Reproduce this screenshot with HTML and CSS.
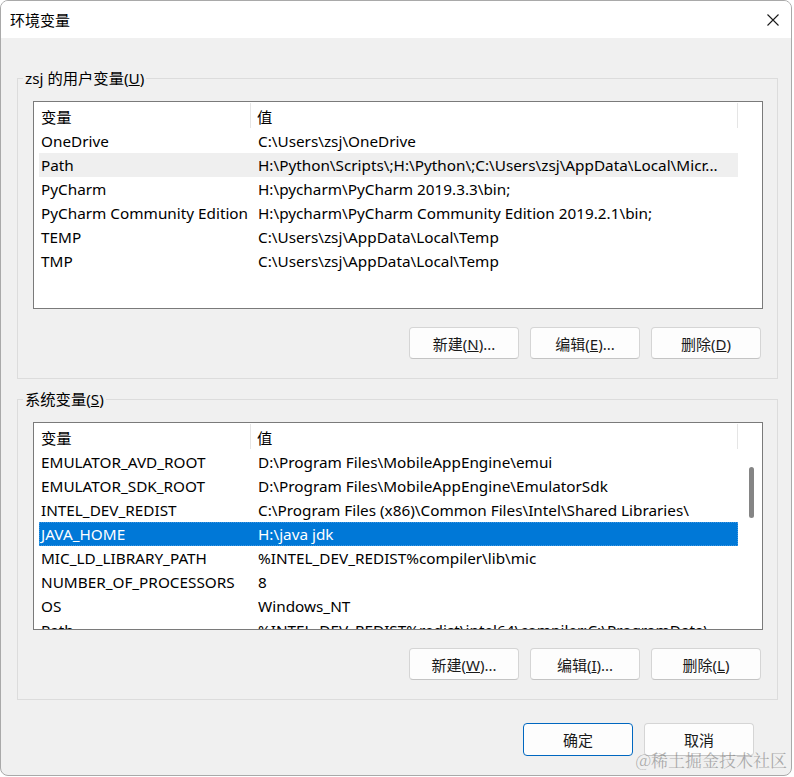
FILE: index.html
```html
<!DOCTYPE html>
<html lang="zh-CN">
<head>
    <meta charset="UTF-8">
    <title>环境变量</title>
    <link rel="stylesheet" href="styles.css">
</head>
<body>
    <div class="window">
        <div class="titlebar">
            <span class="title">环境变量</span>
            <svg class="close" width="12" height="12" viewBox="0 0 12 12">
                <path d="M0.5 0.5 L11.5 11.5 M11.5 0.5 L0.5 11.5" stroke="#1a1a1a" stroke-width="1.1" fill="none"/>
            </svg>
        </div>

        <div class="dialog-body">
            <fieldset class="group group-user">
                <legend>zsj 的用户变量(<u>U</u>)</legend>
                <div class="list">
                    <div class="list-main">
                        <div class="list-head">
                            <div class="head-cell head-name">变量</div>
                            <div class="head-cell head-value">值</div>
                        </div>
                        <div class="row"><div class="cell-name">OneDrive</div><div class="cell-value">C:\Users\zsj\OneDrive</div></div>
                        <div class="row hover"><div class="cell-name">Path</div><div class="cell-value">H:\Python\Scripts\;H:\Python\;C:\Users\zsj\AppData\Local\Micr...</div></div>
                        <div class="row"><div class="cell-name">PyCharm</div><div class="cell-value">H:\pycharm\PyCharm 2019.3.3\bin;</div></div>
                        <div class="row"><div class="cell-name">PyCharm Community Edition</div><div class="cell-value">H:\pycharm\PyCharm Community Edition 2019.2.1\bin;</div></div>
                        <div class="row"><div class="cell-name">TEMP</div><div class="cell-value">C:\Users\zsj\AppData\Local\Temp</div></div>
                        <div class="row"><div class="cell-name">TMP</div><div class="cell-value">C:\Users\zsj\AppData\Local\Temp</div></div>
                    </div>
                    <div class="gutter"></div>
                </div>
                <div class="button-row">
                    <button class="btn">新建(<u>N</u>)...</button>
                    <button class="btn">编辑(<u>E</u>)...</button>
                    <button class="btn">删除(<u>D</u>)</button>
                </div>
            </fieldset>

            <fieldset class="group group-system">
                <legend>系统变量(<u>S</u>)</legend>
                <div class="list">
                    <div class="list-main">
                        <div class="list-head">
                            <div class="head-cell head-name">变量</div>
                            <div class="head-cell head-value">值</div>
                        </div>
                        <div class="row"><div class="cell-name">EMULATOR_AVD_ROOT</div><div class="cell-value">D:\Program Files\MobileAppEngine\emui</div></div>
                        <div class="row"><div class="cell-name">EMULATOR_SDK_ROOT</div><div class="cell-value">D:\Program Files\MobileAppEngine\EmulatorSdk</div></div>
                        <div class="row"><div class="cell-name">INTEL_DEV_REDIST</div><div class="cell-value">C:\Program Files (x86)\Common Files\Intel\Shared Libraries\</div></div>
                        <div class="row selected"><div class="cell-name">JAVA_HOME</div><div class="cell-value">H:\java jdk</div></div>
                        <div class="row"><div class="cell-name">MIC_LD_LIBRARY_PATH</div><div class="cell-value">%INTEL_DEV_REDIST%compiler\lib\mic</div></div>
                        <div class="row"><div class="cell-name">NUMBER_OF_PROCESSORS</div><div class="cell-value">8</div></div>
                        <div class="row"><div class="cell-name">OS</div><div class="cell-value">Windows_NT</div></div>
                        <div class="row"><div class="cell-name">Path</div><div class="cell-value">%INTEL_DEV_REDIST%redist\intel64\compiler;C:\ProgramData\...</div></div>
                    </div>
                    <div class="gutter">
                        <div class="thumb"></div>
                    </div>
                </div>
                <div class="button-row">
                    <button class="btn">新建(<u>W</u>)...</button>
                    <button class="btn">编辑(<u>I</u>)...</button>
                    <button class="btn">删除(<u>L</u>)</button>
                </div>
            </fieldset>

            <div class="dialog-buttons">
                <button class="btn btn-big btn-default">确定</button>
                <button class="btn btn-big">取消</button>
            </div>
        </div>

        <div class="watermark">@稀土掘金技术社区</div>
    </div>
</body>
</html>
```

FILE: styles.css
```css
body {
    margin: 0;
    background: #ffffff;
    font-family: "Noto Sans", "Noto Sans CJK SC", sans-serif;
    font-size: 15.3px;
    color: #000;
}

.window {
    position: relative;
    width: 790px;
    height: 774px;
    border: 1px solid #a9a9a9;
    border-radius: 8px;
    background: #f0f0f0;
    overflow: hidden;
    display: flex;
    flex-direction: column;
}

.titlebar {
    height: 37px;
    background: #ffffff;
    display: flex;
    align-items: center;
    justify-content: space-between;
    padding: 0 12px 0 9px;
}

.title {
    font-size: 15px;
    line-height: 20px;
}

.close {
    display: block;
}

.dialog-body {
    display: flex;
    flex-direction: column;
    padding: 30px 13px 0 16px;
}

.group {
    margin: 0;
    padding: 13px 14px 19px 15px;
    border: 1px solid #dcdcdc;
    min-width: 0;
}

.group legend {
    padding: 0 2px;
    margin-left: -10px;
    line-height: 20px;
}

.group-system {
    margin-top: 10px;
}

.list {
    height: 206px;
    border: 1px solid #7a7a7a;
    background: #ffffff;
    display: flex;
    overflow: hidden;
}

.list-main {
    width: 704px;
    display: flex;
    flex-direction: column;
}

.list-head {
    height: 27px;
    display: flex;
    flex-shrink: 0;
}

.head-cell {
    border-right: 1px solid #e5e5e5;
    margin: 1px 0;
    line-height: 29px;
    overflow: hidden;
}

.head-name {
    width: 217px;
    padding-left: 7px;
    box-sizing: border-box;
}

.head-value {
    flex: 1;
    padding-left: 6px;
}

.row {
    height: 24px;
    line-height: 24px;
    margin-left: 5px;
    display: flex;
    flex-shrink: 0;
    white-space: nowrap;
}

.row.hover {
    background: #efefef;
}

.row.selected {
    background: #0078d7;
    color: #ffffff;
    outline: 1px dotted #3d96e0;
    outline-offset: -1px;
}

.cell-name {
    width: 219px;
    padding-left: 2px;
    box-sizing: border-box;
    overflow: hidden;
}

.cell-value {
    flex: 1;
    overflow: hidden;
}

.gutter {
    flex: 1;
    display: flex;
    flex-direction: column;
    align-items: center;
}

.thumb {
    width: 5px;
    height: 51px;
    margin-top: 44px;
    margin-left: 2px;
    border-radius: 3px;
    background: #858585;
}

.button-row {
    display: flex;
    justify-content: flex-end;
    gap: 11px;
    margin-top: 18px;
    padding-right: 2px;
}

.btn {
    width: 110px;
    height: 32px;
    font-family: "Noto Sans", "Noto Sans CJK SC", sans-serif;
    font-size: 15px;
    color: #1a1a1a;
    background: #fdfdfd;
    border: 1px solid #d5d5d5;
    border-bottom-color: #c4c4c4;
    border-radius: 4px;
    padding: 0;
}

.btn-big {
    height: 33px;
}

.btn-default {
    border: 1px solid #0067c0;
}

.dialog-buttons {
    display: flex;
    justify-content: flex-end;
    gap: 11px;
    margin-top: 23px;
    padding-right: 24px;
}

.watermark {
    position: absolute;
    right: 4px;
    bottom: 3px;
    font-family: "Noto Serif CJK SC", "Noto Sans CJK SC", serif;
    font-size: 17px;
    color: rgba(110, 110, 110, 0.55);
}
```
